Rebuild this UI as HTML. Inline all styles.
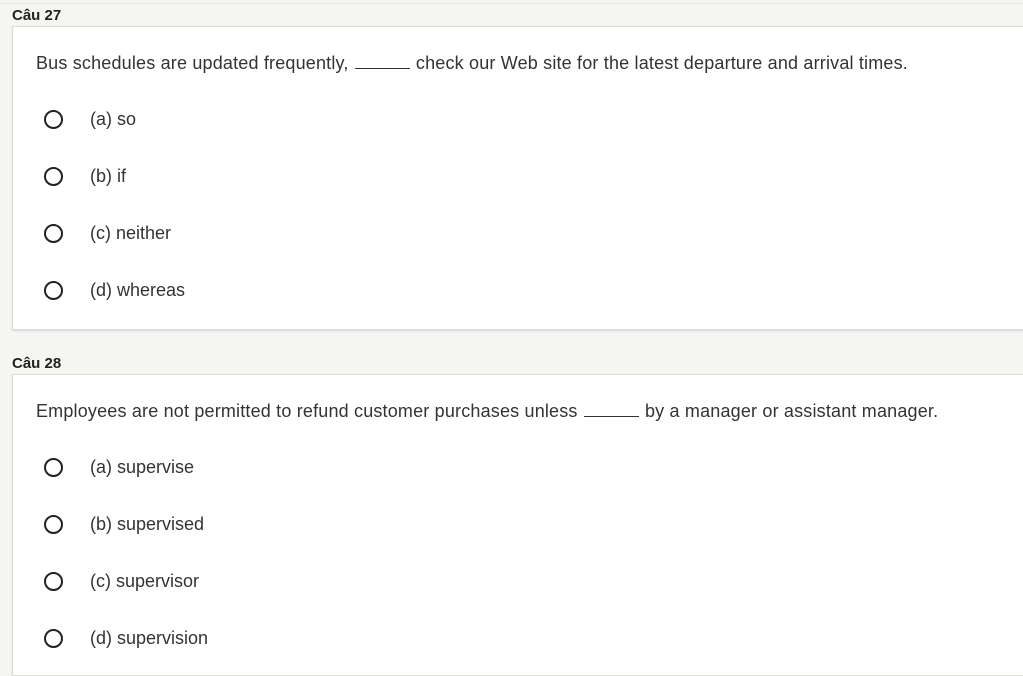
<!DOCTYPE html>
<html><head><meta charset="utf-8"><style>
html,body{margin:0;padding:0;width:1023px;height:669px;overflow:hidden;background:#f5f5f2;font-family:"Liberation Sans",sans-serif;color:#333;}
.topline{position:absolute;left:0;top:3px;width:1023px;height:1px;background:#e2e2de;}
.title{position:absolute;left:12px;font-weight:bold;font-size:15px;color:#222;}
.card{position:absolute;left:12px;width:1020px;background:#fff;border:1px solid #dcdcd8;box-shadow:0 1px 2px rgba(0,0,0,0.12);}
.q{position:absolute;left:36px;font-size:18px;letter-spacing:0.18px;color:#333;line-height:20px;white-space:nowrap;}
.q b{display:inline-block;width:55px;height:12px;border-bottom:1px solid #333;vertical-align:baseline;margin:0 1px;}
.opt{position:absolute;left:44px;font-size:18px;line-height:20px;color:#333;white-space:nowrap;}
.opt i{position:absolute;left:0;top:1px;width:15px;height:15px;border:2.5px solid #222;border-radius:50%;box-sizing:content-box;}
.opt span{position:absolute;left:46px;top:0;}
</style></head><body>
<div class="topline"></div>
<div class="title" style="top:7px">Câu 27</div>
<div class="card" style="top:26px;height:302px"></div>
<div class="q" style="top:53px">Bus schedules are updated frequently, <b></b> check our Web site for the latest departure and arrival times.</div>
<div class="opt" style="top:109px"><i></i><span>(a) so</span></div>
<div class="opt" style="top:166px"><i></i><span>(b) if</span></div>
<div class="opt" style="top:223px"><i></i><span>(c) neither</span></div>
<div class="opt" style="top:280px"><i></i><span>(d) whereas</span></div>

<div class="title" style="top:355px">Câu 28</div>
<div class="card" style="top:374px;height:300px"></div>
<div class="q" style="top:401px">Employees are not permitted to refund customer purchases unless <b></b> by a manager or assistant manager.</div>
<div class="opt" style="top:457px"><i></i><span>(a) supervise</span></div>
<div class="opt" style="top:514px"><i></i><span>(b) supervised</span></div>
<div class="opt" style="top:571px"><i></i><span>(c) supervisor</span></div>
<div class="opt" style="top:628px"><i></i><span>(d) supervision</span></div>
</body></html>
